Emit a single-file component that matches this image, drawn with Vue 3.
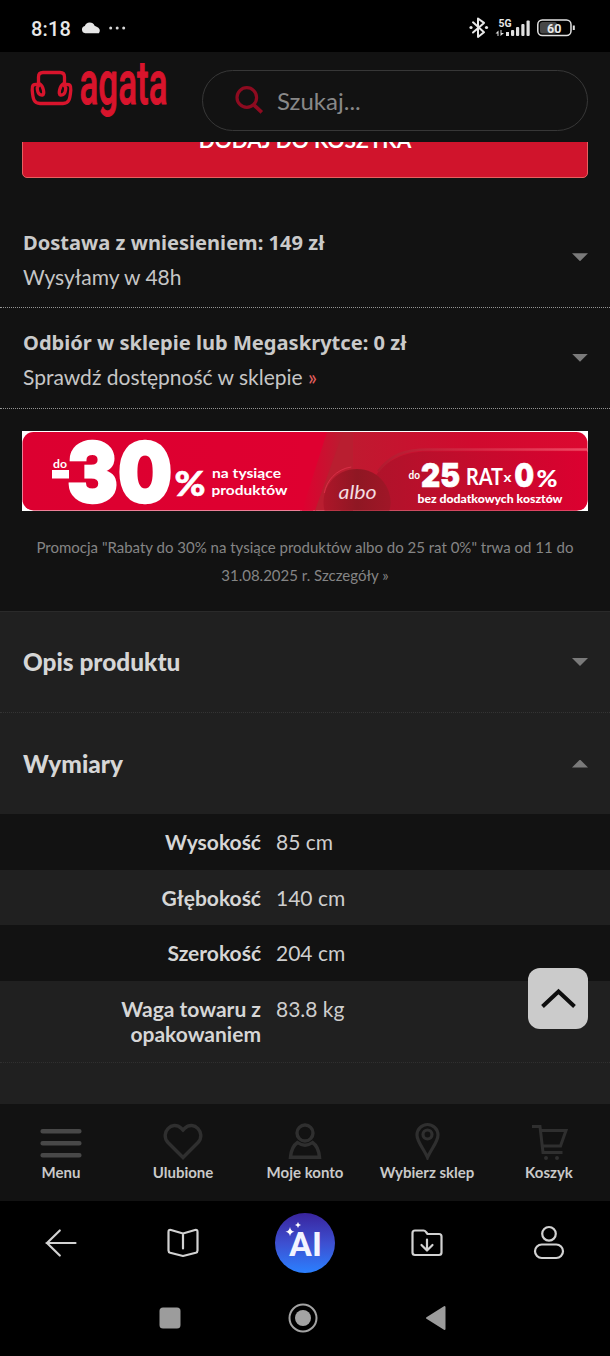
<script setup>
const delivery = [
  { title: 'Dostawa z wniesieniem: 149 zł', text: 'Wysyłamy w 48h', more: false },
  { title: 'Odbiór w sklepie lub Megaskrytce: 0 zł', text: 'Sprawdź dostępność w sklepie', more: true },
]
const dimensions = [
  ['Wysokość', '85 cm'],
  ['Głębokość', '140 cm'],
  ['Szerokość', '204 cm'],
  ['Waga towaru z opakowaniem', '83.8 kg'],
]
</script>

<template>
  <div class="screen">
    <div class="status">
      <span class="clock">8:18</span>
      <svg class="cloud" width="20" height="12" viewBox="0 0 20 12"><path d="M4.2 11.2a3.6 3.6 0 0 1-.4-7.1 5.3 5.3 0 0 1 9.8-.4l2 1a4 4 0 0 1 2.2 6.5z" fill="#e6e6e6"/></svg>
      <svg width="20" height="6" viewBox="0 0 20 6" fill="#d8d8d8"><circle cx="2.7" cy="3" r="1.5"/><circle cx="9.2" cy="3" r="1.5"/><circle cx="15.7" cy="3" r="1.5"/></svg>
      <svg class="signals" width="112" height="24" viewBox="465 16 112 24">
        <g fill="none" stroke="#e8e8e8" stroke-width="2" stroke-linejoin="round" stroke-linecap="round">
          <path d="M473 22.3l11 10-6 4.7V18.5l6 4.4-11 9.6"/>
        </g>
        <circle cx="471" cy="27.5" r="1.6" fill="#e8e8e8"/><circle cx="486.500" cy="27.5" r="1.6" fill="#e8e8e8"/>
        <text x="498.500" y="26.500" class="net" textLength="13" lengthAdjust="spacingAndGlyphs">5G</text>
        <g fill="#e0e0e0">
          <path d="M495.500 33.500l3-3v5.500h-1v-2.500zM500.500 30h1v3h2.500l-3.500 3zM506 32h3v4h-3z"/>
          <rect x="511" y="30" width="3.200" height="6" rx="1"/><rect x="516" y="27" width="3.200" height="9" rx="1"/><rect x="521.300" y="24" width="3.200" height="12" rx="1"/><rect x="526.500" y="20.500" width="3.200" height="15.500" rx="1"/>
        </g>
        <rect x="537.800" y="20" width="33.200" height="15.500" rx="4.500" fill="#000" stroke="#e2e2e2" stroke-width="1.500"/>
        <rect x="540" y="22" width="17" height="11.500" rx="2.500" fill="#474747"/>
        <path d="M573.800 25.500v4.500" stroke="#e2e2e2" stroke-width="2"/>
        <text x="554.200" y="33" text-anchor="middle" class="batt">60</text>
      </svg>
    </div>

    <header class="header">
      <svg class="logo" width="145" height="64" viewBox="27 58 145 64">
        <g fill="none" stroke="#d8142c" stroke-width="3.300" stroke-linecap="round" stroke-linejoin="round">
          <path d="M38.500 86V77q0-4.500 4.500-4.500h17q4.500 0 4.500 4.500V86"/>
          <path d="M42.500 95c-6 .5-6.500-10.300-3-11.300 4 2 5.500 11 3 11.300M38 84.500c-5-.8-6.200 1-5.800 5.500.7 9.500 1.800 13.500 7.800 13.500h23c6 0 7-4 7.800-13.500.4-4.500-.8-6.300-5.800-5.500M60.500 95c6 .5 6.500-10.300 3-11.300-4 2-5.500 11-3 11.300"/>
        </g>
        <text x="79.500" y="104" class="brand" textLength="88" lengthAdjust="spacingAndGlyphs">agata</text>
      </svg>
      <div class="search">
        <svg width="30" height="30" viewBox="0 0 30 30" fill="none" stroke="#8e0b20" stroke-width="3.200"><circle cx="11.800" cy="11.500" r="9.800"/><path d="M18.800 18.800l8 7.500" stroke-width="3.800"/></svg>
        <span>Szukaj...</span>
      </div>
    </header>

    <div class="cart-wrap"><div class="cart-btn"><span>DODAJ DO KOSZYKA</span></div></div>

    <section class="delivery">
      <div v-for="d in delivery" :key="d.title" class="drow">
        <div class="dbody">
          <div class="dtitle">{{ d.title }}</div>
          <div class="dtext">{{ d.text }}<b v-if="d.more"> »</b></div>
        </div>
        <i class="arrow"></i>
      </div>
    </section>

    <svg class="banner" width="566" height="80" viewBox="22 431 566 80">
      <defs>
        <linearGradient id="base" x1="0" x2="1"><stop offset="0" stop-color="#dc0030"/><stop offset=".53" stop-color="#df0030"/><stop offset=".55" stop-color="#bd1c30"/><stop offset=".8" stop-color="#d00a2e"/><stop offset="1" stop-color="#dc0830"/></linearGradient>
        <linearGradient id="tab" x1="0" x2="1"><stop offset="0" stop-color="#a8162a"/><stop offset=".5" stop-color="#c20c2c"/><stop offset="1" stop-color="#dc0030"/></linearGradient>
        <linearGradient id="edge" gradientUnits="userSpaceOnUse" x1="375" x2="588"><stop offset="0" stop-color="#b01a2e"/><stop offset=".5" stop-color="#d62a46"/><stop offset="1" stop-color="#f04a66"/></linearGradient>
        <linearGradient id="slant" x1="0" x2="1"><stop offset="0" stop-color="#df0030"/><stop offset="1" stop-color="#b91e30"/></linearGradient>
        <linearGradient id="disc" x1="0" x2="1"><stop offset="0" stop-color="#ad1629"/><stop offset=".5" stop-color="#8f1723"/><stop offset="1" stop-color="#a01627"/></linearGradient>
      </defs>
      <rect x="22" y="431" width="566" height="80" fill="#fff"/>
      <rect x="22.500" y="432" width="565" height="78.500" rx="11" fill="url(#base)"/>
      <path d="M300 432h40l-27 78.500h-13z" fill="#df0030"/>
      <path d="M327 432h17l-28 78.500h-14z" fill="url(#slant)"/>
      <path d="M343 432h10v78.500h-38z" fill="#b91e30"/>
      <path d="M340 510.500c20-12 27-24 38-38 9-11 24-21 50-21h159.500v48q0 11-11 11z" fill="url(#tab)"/>
      <path d="M378 471.500c12-16 26-22 50-22h159.500" fill="none" stroke="url(#edge)" stroke-width="2.500"/>
      <path d="M324.500 510.500a33.500 33.500 0 1 1 65 0z" fill="url(#disc)"/>
      <path d="M324.300 493c2-12 12-24 27-26" fill="none" stroke="#e3344e" stroke-width="1" opacity=".75"/>
      <g class="bt" fill="#fff">
        <text x="53" y="468" font-size="12" font-weight="700" textLength="14" lengthAdjust="spacingAndGlyphs">do</text>
        <rect x="52" y="470" width="17" height="8.500"/>
        <text x="67" y="501.500" class="huge" textLength="105" lengthAdjust="spacingAndGlyphs">30</text>
        <text x="174.500" y="495.500" font-size="35" class="pct" textLength="31" lengthAdjust="spacingAndGlyphs">%</text>
        <text x="212" y="477.500" font-size="14" font-weight="700" textLength="69" lengthAdjust="spacingAndGlyphs">na tysiące</text>
        <text x="211.500" y="494.500" font-size="14" font-weight="700" textLength="76" lengthAdjust="spacingAndGlyphs">produktów</text>
        <text x="338.500" y="499" font-size="20" font-style="italic" textLength="38" lengthAdjust="spacingAndGlyphs" fill="#f4dce0">albo</text>
        <text x="408.500" y="479" font-size="10.500" font-weight="700" textLength="11.500" lengthAdjust="spacingAndGlyphs">do</text>
        <text x="421" y="487" class="mid" textLength="39" lengthAdjust="spacingAndGlyphs">25</text>
        <text x="466" y="484.500" font-size="22" font-weight="700" textLength="37" lengthAdjust="spacingAndGlyphs">RAT</text>
        <text x="503.500" y="482" font-size="14" font-weight="700" textLength="8" lengthAdjust="spacingAndGlyphs">x</text>
        <text x="514.500" y="487" class="mid" textLength="19.500" lengthAdjust="spacingAndGlyphs">0</text>
        <text x="536.500" y="487" font-size="22" class="pct2" textLength="21" lengthAdjust="spacingAndGlyphs">%</text>
        <text x="417.500" y="502.500" font-size="11.500" font-weight="900" textLength="145" lengthAdjust="spacingAndGlyphs">bez dodatkowych kosztów</text>
      </g>
    </svg>

    <p class="promo">Promocja "Rabaty do 30% na tysiące produktów albo do 25 rat 0%" trwa od 11 do<br>31.08.2025 r. Szczegóły »</p>

    <section class="panel">
      <div class="acc first"><h2>Opis produktu</h2><i class="arrow"></i></div>
      <div class="acc"><h2>Wymiary</h2><i class="arrow up"></i></div>
      <div class="dims">
        <div v-for="[k, v] in dimensions" :key="k" class="dim"><strong>{{ k }}</strong><span>{{ v }}</span></div>
      </div>
      <div class="top-btn">
        <svg width="36" height="22" viewBox="0 0 36 22" fill="none" stroke="#0e0e0e" stroke-width="4"><path d="M2.500 18.500L18.500 3.500l16 15"/></svg>
      </div>
    </section>

    <nav class="tabs">
      <div class="tab">
        <svg width="44" height="40" viewBox="0 0 44 40" stroke="#484848" stroke-width="4.600" stroke-linecap="round"><path d="M3.700 11.300h36.600M3.700 23.300h36.600M3.700 35.300h36.600"/></svg>
        <span>Menu</span>
      </div>
      <div class="tab">
        <svg width="44" height="40" viewBox="0 0 44 40" fill="none" stroke="#2f2f2f" stroke-width="3.400"><path d="M22 37.500L7 22.500C-1.500 13 11-.5 20.500 8.500L22 10l1.500-1.500C33-.5 45.500 13 37 22.500z"/></svg>
        <span>Ulubione</span>
      </div>
      <div class="tab">
        <svg width="44" height="40" viewBox="0 0 44 40" fill="none" stroke="#2f2f2f" stroke-width="3.400"><circle cx="22" cy="13" r="8"/><path d="M14.500 22.500q-6 4-7 14.700h29q-1-10.700-7-14.700-7.500 5.500-15 0z"/></svg>
        <span>Moje konto</span>
      </div>
      <div class="tab">
        <svg width="44" height="40" viewBox="0 0 44 40" fill="none" stroke="#2f2f2f" stroke-width="3.200"><path d="M22.500 37.500C19 29 12 22 12 15a10.500 10.500 0 0 1 21 0C33 22 26 29 22.500 37.500z"/><circle cx="22.500" cy="14.500" r="4.500"/></svg>
        <span>Wybierz sklep</span>
      </div>
      <div class="tab">
        <svg width="44" height="40" viewBox="0 0 44 40" fill="none" stroke="#2f2f2f" stroke-width="3"><path d="M5 6.500h8l3 26h19.500M14 10.500h25l-5.500 15.500H16.500"/><circle cx="19" cy="38" r="2" fill="#2f2f2f" stroke="none"/><circle cx="30" cy="38" r="2" fill="#2f2f2f" stroke="none"/></svg>
        <span>Koszyk</span>
      </div>
    </nav>

    <div class="browser">
      <svg width="60" height="60" viewBox="0 0 60 60"><path d="M44.500 30h-29M28.800 17.500L16 30l12.800 12.500" /></svg>
      <svg width="60" height="60" viewBox="0 0 60 60"><path d="M30 20.500v15M30 20.500l-12-3.500q-2.500-.7-2.500 2v18.500q0 1.800 1.700 2.300L30 43l12.800-3.200q1.700-.5 1.700-2.300V19q0-2.700-2.500-2z"/></svg>
      <div class="ai">
        <svg width="60" height="60" viewBox="0 0 60 60">
          <path class="star" d="M15 14q.6 4 4.500 4.700-3.900.6-4.500 4.500-.6-3.900-4.500-4.500 3.900-.7 4.500-4.700zM23 9q.4 2.500 3 3-2.600.5-3 3-.4-2.500-3-3 2.600-.5 3-3z"/>
          <text x="14" y="42.500" textLength="33" lengthAdjust="spacingAndGlyphs">AI</text>
        </svg>
      </div>
      <svg width="60" height="60" viewBox="0 0 60 60"><path d="M18 17.500h8.500q1.500 0 2.500 1.500l1.500 2H42q2.500 0 2.500 2.500v16q0 2.500-2.500 2.500H18q-2.500 0-2.500-2.500V20q0-2.500 2.500-2.500zM30 26.500V37M24.500 32l5.500 5.500 5.500-5.500"/></svg>
      <svg width="60" height="60" viewBox="0 0 60 60"><circle cx="30" cy="20.800" r="6.800"/><rect x="16" y="31.500" width="28" height="13.500" rx="6.750"/></svg>
    </div>

    <div class="system">
      <svg width="22" height="30" viewBox="0 0 22 30"><rect x=".500" y="4.500" width="21" height="21" rx="3.500" fill="#9c9c9c"/></svg>
      <svg width="30" height="30" viewBox="0 0 30 30"><circle cx="15" cy="15" r="13.500" fill="none" stroke="#a3a3a3" stroke-width="2"/><circle cx="15" cy="15" r="8" fill="#a3a3a3"/></svg>
      <svg width="22" height="30" viewBox="0 0 22 30"><path d="M2 15L19.500 4v22z" fill="#9c9c9c" stroke="#9c9c9c" stroke-width="2" stroke-linejoin="round"/></svg>
    </div>
  </div>
</template>

<style>
body { margin: 0; background: #000; }
</style>

<style scoped>
* { box-sizing: border-box; }
svg { display: block; flex: none; }
.screen { width: 610px; height: 1356px; overflow: hidden; background: #121212; color: #d0d0d0; font-family: Lato, sans-serif; }
.status { height: 52px; background: #000; display: flex; align-items: center; padding: 4px 33px 0 31px; }
.clock { font: 500 20px Roboto, sans-serif; color: #e8e8e8; width: 50px; letter-spacing: .2px; padding-top: 1px; }
.cloud { margin-right: 7px; }
.signals { margin-left: auto; }
.net { font: 700 10px Roboto, sans-serif; fill: #e8e8e8; }
.batt { font: 700 12.500px Roboto, sans-serif; fill: #e8e8e8; }
.header { height: 90px; background: #121212; display: flex; padding: 6px 22px 0 27px; }
.brand { font: 500 62px Roboto, sans-serif; fill: #d8142c; stroke: #d8142c; stroke-width: 1; stroke-linejoin: round; }
.search { margin: 12px 0 0 30px; width: 386px; height: 61px; border: 1.500px solid #373737; border-radius: 31px; display: flex; align-items: center; gap: 12px; padding-left: 32px; color: #888; font-size: 24px; }
.search span { margin-top: -1px; }
.cart-wrap { height: 36px; padding: 0 22px; overflow: hidden; display: flex; align-items: flex-end; }
.cart-btn { flex: 1; height: 90px; background: #d0142c; border: 1.500px solid #e66060; border-radius: 5px; text-align: center; color: #fff; font-size: 21px; font-weight: 700; line-height: 26px; padding-top: 38px; }
.delivery { padding-top: 29.500px; }
.drow { height: 100.500px; display: flex; align-items: center; justify-content: space-between; padding: 0 22px 0 23px; border-bottom: 1px dotted #949494; }
.dbody { padding-top: 4px; }
.dtitle { font: 700 20.100px/35px "Noto Sans", sans-serif; color: #cacaca; }
.dtext { font-size: 21px; line-height: 34px; color: #c6c6c6; }
.dtext b { color: #e66060; font-weight: 400; }
.arrow { width: 16px; height: 8px; background: #7a7a7a; clip-path: polygon(0 0, 100% 0, 50% 100%); }
.arrow.up { clip-path: polygon(50% 0, 100% 100%, 0 100%); }
.banner { margin: 22.500px 0 0 22px; }
.bt { font-family: Lato, sans-serif; }
.huge { font: 900 83px Inter, sans-serif; stroke: #fff; stroke-width: 2.500; }
.pct { font-weight: 900; stroke: #fff; stroke-width: .6; }
.pct2 { font-weight: 900; }
.mid { font: 900 33px Inter, sans-serif; stroke: #fff; stroke-width: .7; }
.promo { margin: 22px 0 0; text-align: center; font-size: 15px; line-height: 28px; color: #858585; height: 78px; }
.panel { background: #202020; height: 493px; border-top: 1px solid #2a2a2a; position: relative; }
.acc { height: 101px; display: flex; align-items: center; justify-content: space-between; padding: 0 22px 0 23px; }
.first { border-bottom: 1px dotted #343434; }
h2 { margin: 0; font-size: 24.400px; line-height: 30px; font-weight: 900; color: #d6d6d6; }
.dim { display: flex; min-height: 55.500px; padding: 15px 22px; font-size: 21px; line-height: 25.500px; gap: 15px; color: #cecece; }
.dim:nth-child(odd) { background: #121212; }
.dim:last-child { height: 82px; border-bottom: 1px dotted #303030; }
.dim strong { width: 239px; padding-left: 90px; text-align: right; color: #d6d6d6; }
.top-btn { position: absolute; left: 528px; top: 356px; width: 60px; height: 61px; border-radius: 12px; background: #cbcbcb; display: grid; place-items: center; }
.tabs { height: 97px; background: #121212; display: grid; grid-template-columns: repeat(5, 1fr); padding-top: 16px; }
.tab { display: flex; flex-direction: column; align-items: center; font-size: 15px; font-weight: 700; color: #c9c9c9; white-space: nowrap; }
.tab span { line-height: 20px; margin-top: 2px; }
.browser { height: 84px; background: #000; display: grid; grid-template-columns: repeat(5, 1fr); place-items: center; }
.browser > svg { fill: none; stroke: #d2d2d2; stroke-width: 2.200; stroke-linecap: round; stroke-linejoin: round; }
.ai { width: 60px; height: 60px; border-radius: 50%; background: linear-gradient(#39249d, #3d4fd0 50%, #2b80ff); }
.ai text { font: 700 34px Roboto, sans-serif; fill: #f2f4ff; }
.star { fill: #fff; }
.system { height: 71px; background: #000; display: flex; padding: 18px 0 0 159px; gap: 107px; }
</style>
